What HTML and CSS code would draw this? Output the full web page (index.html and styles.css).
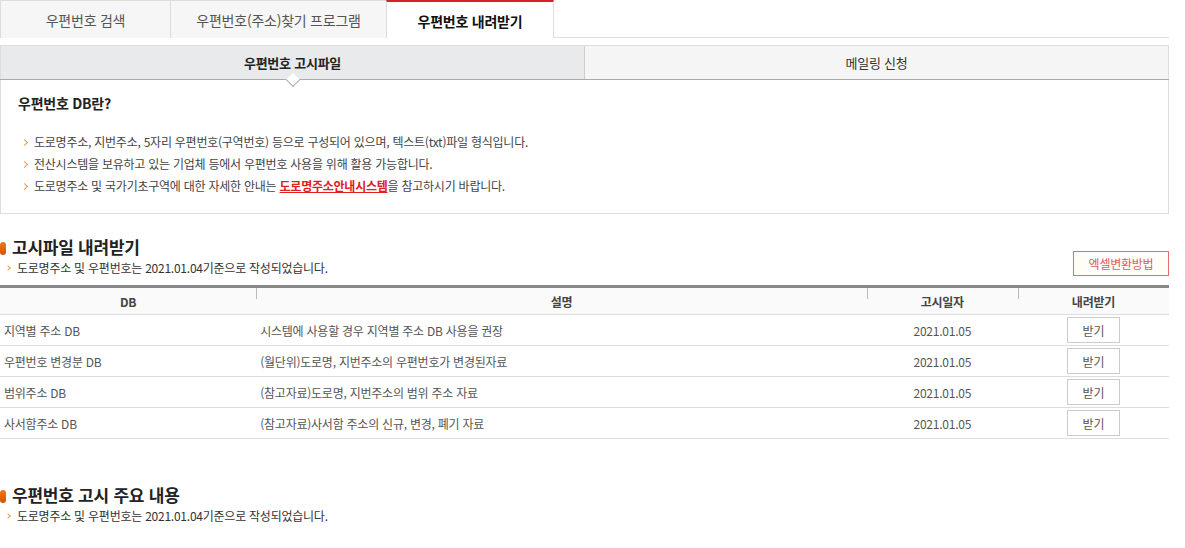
FILE: index.html
```html
<!DOCTYPE html>
<html lang="ko">
<head>
<meta charset="utf-8">
<title>우편번호 내려받기</title>
<link rel="stylesheet" href="styles.css">
</head>
<body>
<div class="page">
  <ul class="tabs">
    <li class="tab">우편번호 검색</li>
    <li class="tab tab-wide">우편번호(주소)찾기 프로그램</li>
    <li class="tab active">우편번호 내려받기</li>
  </ul>

  <ul class="subtabs">
    <li class="subtab on">우편번호 고시파일</li>
    <li class="subtab">메일링 신청</li>
  </ul>

  <div class="infobox">
    <h3 class="info-title">우편번호 DB란?</h3>
    <ul class="bullets">
      <li>도로명주소, 지번주소, 5자리 우편번호(구역번호) 등으로 구성되어 있으며, 텍스트(txt)파일 형식입니다.</li>
      <li>전산시스템을 보유하고 있는 기업체 등에서 우편번호 사용을 위해 활용 가능합니다.</li>
      <li>도로명주소 및 국가기초구역에 대한 자세한 안내는 <a class="link" href="#">도로명주소안내시스템</a>을 참고하시기 바랍니다.</li>
    </ul>
  </div>

  <section class="section">
    <h2 class="sec-title">고시파일 내려받기</h2>
    <div class="sec-row">
      <p class="note">도로명주소 및 우편번호는 2021.01.04기준으로 작성되었습니다.</p>
      <a class="excel-btn" href="#">엑셀변환방법</a>
    </div>
    <table class="dbtable">
      <colgroup>
        <col class="c1"><col class="c2"><col class="c3"><col class="c4">
      </colgroup>
      <thead>
        <tr><th>DB</th><th>설명</th><th>고시일자</th><th>내려받기</th></tr>
      </thead>
      <tbody>
        <tr><td>지역별 주소 DB</td><td>시스템에 사용할 경우 지역별 주소 DB 사용을 권장</td><td class="date">2021.01.05</td><td class="dl"><a class="get" href="#">받기</a></td></tr>
        <tr><td>우편번호 변경분 DB</td><td>(월단위)도로명, 지번주소의 우편번호가 변경된자료</td><td class="date">2021.01.05</td><td class="dl"><a class="get" href="#">받기</a></td></tr>
        <tr><td>범위주소 DB</td><td>(참고자료)도로명, 지번주소의 범위 주소 자료</td><td class="date">2021.01.05</td><td class="dl"><a class="get" href="#">받기</a></td></tr>
        <tr><td>사서함주소 DB</td><td>(참고자료)사서함 주소의 신규, 변경, 폐기 자료</td><td class="date">2021.01.05</td><td class="dl"><a class="get" href="#">받기</a></td></tr>
      </tbody>
    </table>
  </section>

  <section class="section section2">
    <h2 class="sec-title">우편번호 고시 주요 내용</h2>
    <div class="sec-row">
      <p class="note">도로명주소 및 우편번호는 2021.01.04기준으로 작성되었습니다.</p>
    </div>
  </section>
</div>
</body>
</html>
```

FILE: styles.css
```css
* { box-sizing: border-box; }
html, body { margin: 0; padding: 0; background: #fff; }
body {
  font-family: "Noto Sans CJK KR", "Noto Sans", sans-serif;
  color: #444;
  font-size: 12px;
  letter-spacing: -0.02em;
}
.page { width: 1169px; }
ul { list-style: none; margin: 0; padding: 0; }
h2, h3, p { margin: 0; }
a { text-decoration: none; }

/* top tabs */
.tabs {
  display: flex;
  height: 38px;
  border-bottom: 1px solid #ddd;
}
.tab {
  width: 170px;
  height: 38px;
  display: flex;
  align-items: center;
  justify-content: center;
  background: #f6f6f6;
  border-left: 1px solid #ddd;
  border-top: 1px solid #ddd;
  font-size: 14px;
  color: #555;
}
.tab-wide { width: 216px; }
.tab.active {
  width: 168px;
  height: 38px;
  background: #fff;
  border-top: 2px solid #d32222;
  border-right: 1px solid #ddd;
  margin-bottom: -1px;
  font-weight: bold;
  color: #111;
  padding-top: 1px;
}

/* sub tabs */
.subtabs {
  display: flex;
  margin-top: 7px;
  height: 35px;
  border-top: 1px solid #ddd;
  border-bottom: 1px solid #aaa;
}
.subtab {
  flex: 1;
  display: flex;
  align-items: center;
  justify-content: center;
  background: #f5f5f5;
  border-right: 1px solid #ddd;
  font-size: 13px;
  color: #333;
  position: relative;
}
.subtab.on {
  background: #e8eaeb;
  border-left: 1px solid #ddd;
  border-right: 1px solid #ccc;
  font-weight: bold;
  color: #222;
  flex: 0 0 585px;
}
.subtab.on::after {
  content: "";
  position: absolute;
  left: 287px;
  bottom: -6px;
  width: 9px;
  height: 9px;
  background: #fff;
  border-right: 1px solid #aaa;
  border-bottom: 1px solid #aaa;
  transform: rotate(45deg);
}

/* info box */
.infobox {
  border: 1px solid #ddd;
  border-top: 0;
  padding: 14px 17px 16px;
}
.info-title {
  font-size: 14px;
  font-weight: bold;
  color: #222;
  line-height: 18px;
}
.bullets { margin-top: 19px; }
.bullets li {
  position: relative;
  padding-left: 16px;
  line-height: 22px;
  color: #444;
}
.bullets li::before,
.note::before {
  content: "";
  position: absolute;
  left: 4px;
  top: 9px;
  width: 4px;
  height: 4px;
  border-right: 1.5px solid #e0a060;
  border-top: 1.5px solid #e0a060;
  transform: rotate(45deg);
}
.link {
  color: #e02020;
  font-weight: bold;
  text-decoration: underline;
}

/* sections */
.section { margin-top: 21px; }
.section2 { margin-top: 44px; }
.sec-title {
  position: relative;
  padding-left: 12px;
  font-size: 17px;
  font-weight: bold;
  color: #222;
  line-height: 24px;
}
.sec-title::before {
  content: "";
  position: absolute;
  left: 0;
  top: 7px;
  width: 6px;
  height: 13px;
  border-radius: 3px;
  background: linear-gradient(#f07a10, #d85000);
}
.sec-row {
  display: flex;
  justify-content: space-between;
  align-items: flex-start;
}
.note {
  position: relative;
  padding-left: 17px;
  line-height: 18px;
  color: #333;
}
.note::before { left: 6px; top: 7px; width: 3px; height: 3px; }
.excel-btn {
  margin-top: -8px;
  width: 96px;
  height: 25px;
  border: 1px solid #e86a6a;
  background: #fffdf8;
  color: #e05a5a;
  display: flex;
  align-items: center;
  justify-content: center;
  font-size: 12px;
}

/* table */
.dbtable {
  width: 100%;
  margin-top: 8px;
  border-collapse: collapse;
  border-top: 3px solid #888;
  table-layout: fixed;
}
.c1 { width: 256px; }
.c2 { width: 610px; }
.c3 { width: 151px; }
.c4 { width: 151px; }
.dbtable th {
  height: 28px;
  background: #fafafa;
  font-weight: bold;
  color: #444;
  font-size: 12px;
  border-bottom: 1px solid #ddd;
  position: relative;
  padding: 0;
}
.dbtable th + th::before {
  content: "";
  position: absolute;
  left: 0;
  top: 0;
  width: 1px;
  height: 11px;
  background: #bbb;
}
.dbtable td {
  height: 31px;
  border-bottom: 1px solid #ddd;
  color: #555;
  padding: 0 4px;
  vertical-align: middle;
}
.dbtable td.date { text-align: center; }
.dbtable td.dl { text-align: center; padding: 0; }
.get {
  display: inline-flex;
  align-items: center;
  justify-content: center;
  width: 53px;
  height: 26px;
  border: 1px solid #ccc;
  color: #555;
  background: #fff;
  vertical-align: middle;
}
```
